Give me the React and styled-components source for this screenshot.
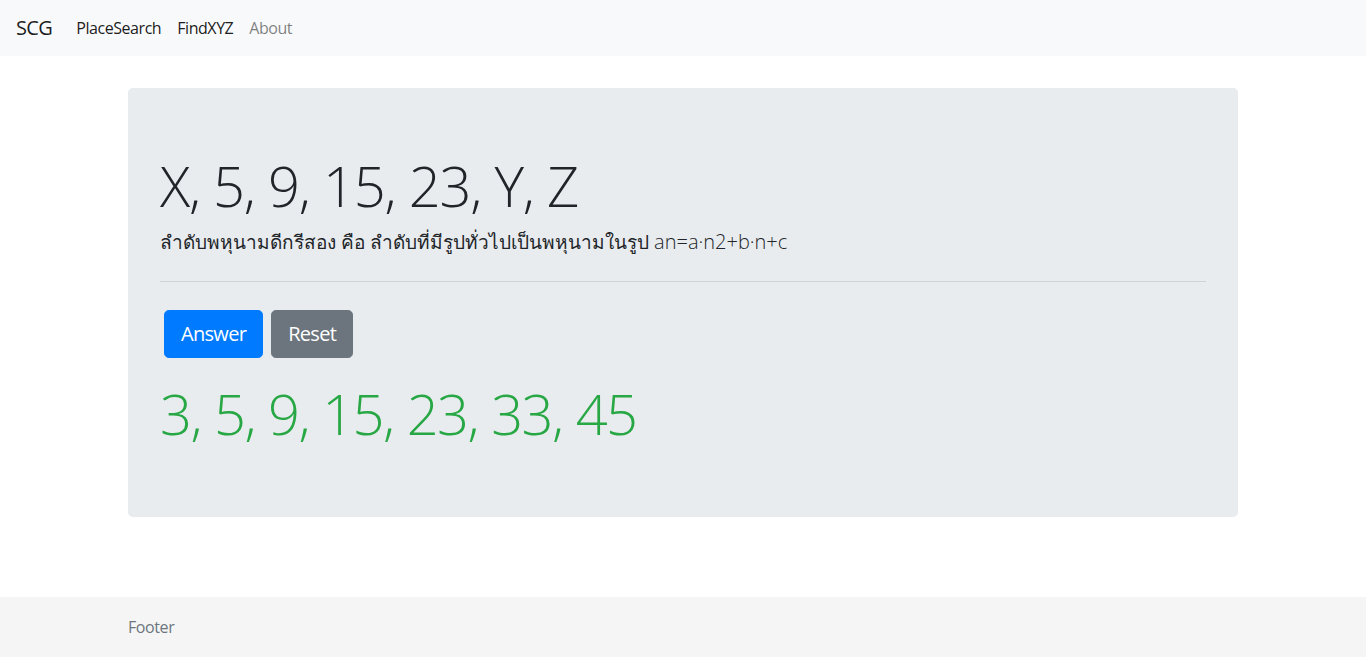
import React, {useState} from 'react'
import styled, {createGlobalStyle} from "styled-components";

const GlobalStyle = createGlobalStyle`
  html, body {
    margin: 0;
    padding: 0;
    height: 100%;
  }
  body {
    font-family: "Open Sans", "Noto Sans", "DejaVu Sans", sans-serif;
    font-size: 16px;
    line-height: 1.5;
    color: #212529;
    background: #fff;
  }
  *, *::before, *::after { box-sizing: border-box; }
`;

const Page = styled.div`
  min-height: 100vh;
  display: flex;
  flex-direction: column;
`;

const NavBar = styled.nav`
  display: flex;
  align-items: center;
  height: 56px;
  padding: 8px 16px;
  background: #f8f9fa;
`;

const Brand = styled.a`
  font-size: 20px;
  line-height: 30px;
  margin-right: 16px;
  letter-spacing: -0.6px;
  color: rgba(0, 0, 0, .9);
  text-decoration: none;
`;

const NavLink = styled.a`
  padding: 8px;
  letter-spacing: -0.45px;
  color: ${({active}) => active ? 'rgba(0, 0, 0, .9)' : 'rgba(0, 0, 0, .5)'};
  text-decoration: none;
  cursor: pointer;
`;

const Container = styled.div`
  width: 1140px;
  margin: 0 auto;
  padding: 0 15px;
`;

const Jumbotron = styled.div`
  margin-top: 32px;
  padding: 64px 32px;
  background: #e9ecef;
  border-radius: 4.8px;
`;

const Display = styled.h1`
  margin: 0 0 8px;
  font-size: 56px;
  font-weight: 300;
  line-height: 1.2;
  letter-spacing: ${({success}) => success ? '-1.5px' : '-1.2px'};
  color: ${({success}) => success ? '#28a745' : '#212529'};
`;

const Lead = styled.p`
  margin: 0;
  font-size: 20px;
  font-weight: 300;
  line-height: 1.5;
  span {
    font-size: 19px;
    font-weight: 500;
  }
`;

const Rule = styled.hr`
  margin: 24px 0;
  border: 0;
  border-top: 1px solid rgba(0, 0, 0, .1);
`;

const ButtonRow = styled.div`
  display: flex;
  padding: 4px;
  gap: 8px;
`;

const Button = styled.button`
  font-family: inherit;
  font-size: 20px;
  line-height: 30px;
  padding: 8px 16px;
  letter-spacing: -0.7px;
  border: 1px solid ${({variant}) => variant === 'primary' ? '#007bff' : '#6c757d'};
  border-radius: 4.8px;
  color: #fff;
  background: ${({variant}) => variant === 'primary' ? '#007bff' : '#6c757d'};
  cursor: pointer;
`;

const Result = styled(Display)`
  margin-top: 18px;
  margin-bottom: 6px;
`;

const Footer = styled.footer`
  margin-top: auto;
  height: 60px;
  line-height: 60px;
  background: #f5f5f5;
  color: #6c757d;
  letter-spacing: -0.4px;
`;

const answer = "3, 5, 9, 15, 23, 33, 45";

const App = () => {
    const [shown, setShown] = useState(true);

    return (
        <Page>
            <GlobalStyle/>
            <NavBar>
                <Brand href="#">SCG</Brand>
                <NavLink active>PlaceSearch</NavLink>
                <NavLink active>FindXYZ</NavLink>
                <NavLink>About</NavLink>
            </NavBar>

            <Container>
                <Jumbotron>
                    <Display>X, 5, 9, 15, 23, Y, Z</Display>
                    <Lead>
                        <span>ลำดับพหุนามดีกรีสอง คือ ลำดับที่มีรูปทั่วไปเป็นพหุนามในรูป</span> an=a·n2+b·n+c
                    </Lead>
                    <Rule/>
                    <ButtonRow>
                        <Button variant="primary" onClick={() => setShown(true)}>Answer</Button>
                        <Button variant="secondary" onClick={() => setShown(false)}>Reset</Button>
                    </ButtonRow>
                    {shown && <Result success>{answer}</Result>}
                </Jumbotron>
            </Container>

            <Footer>
                <Container>Footer</Container>
            </Footer>
        </Page>
    );
};

export default App
